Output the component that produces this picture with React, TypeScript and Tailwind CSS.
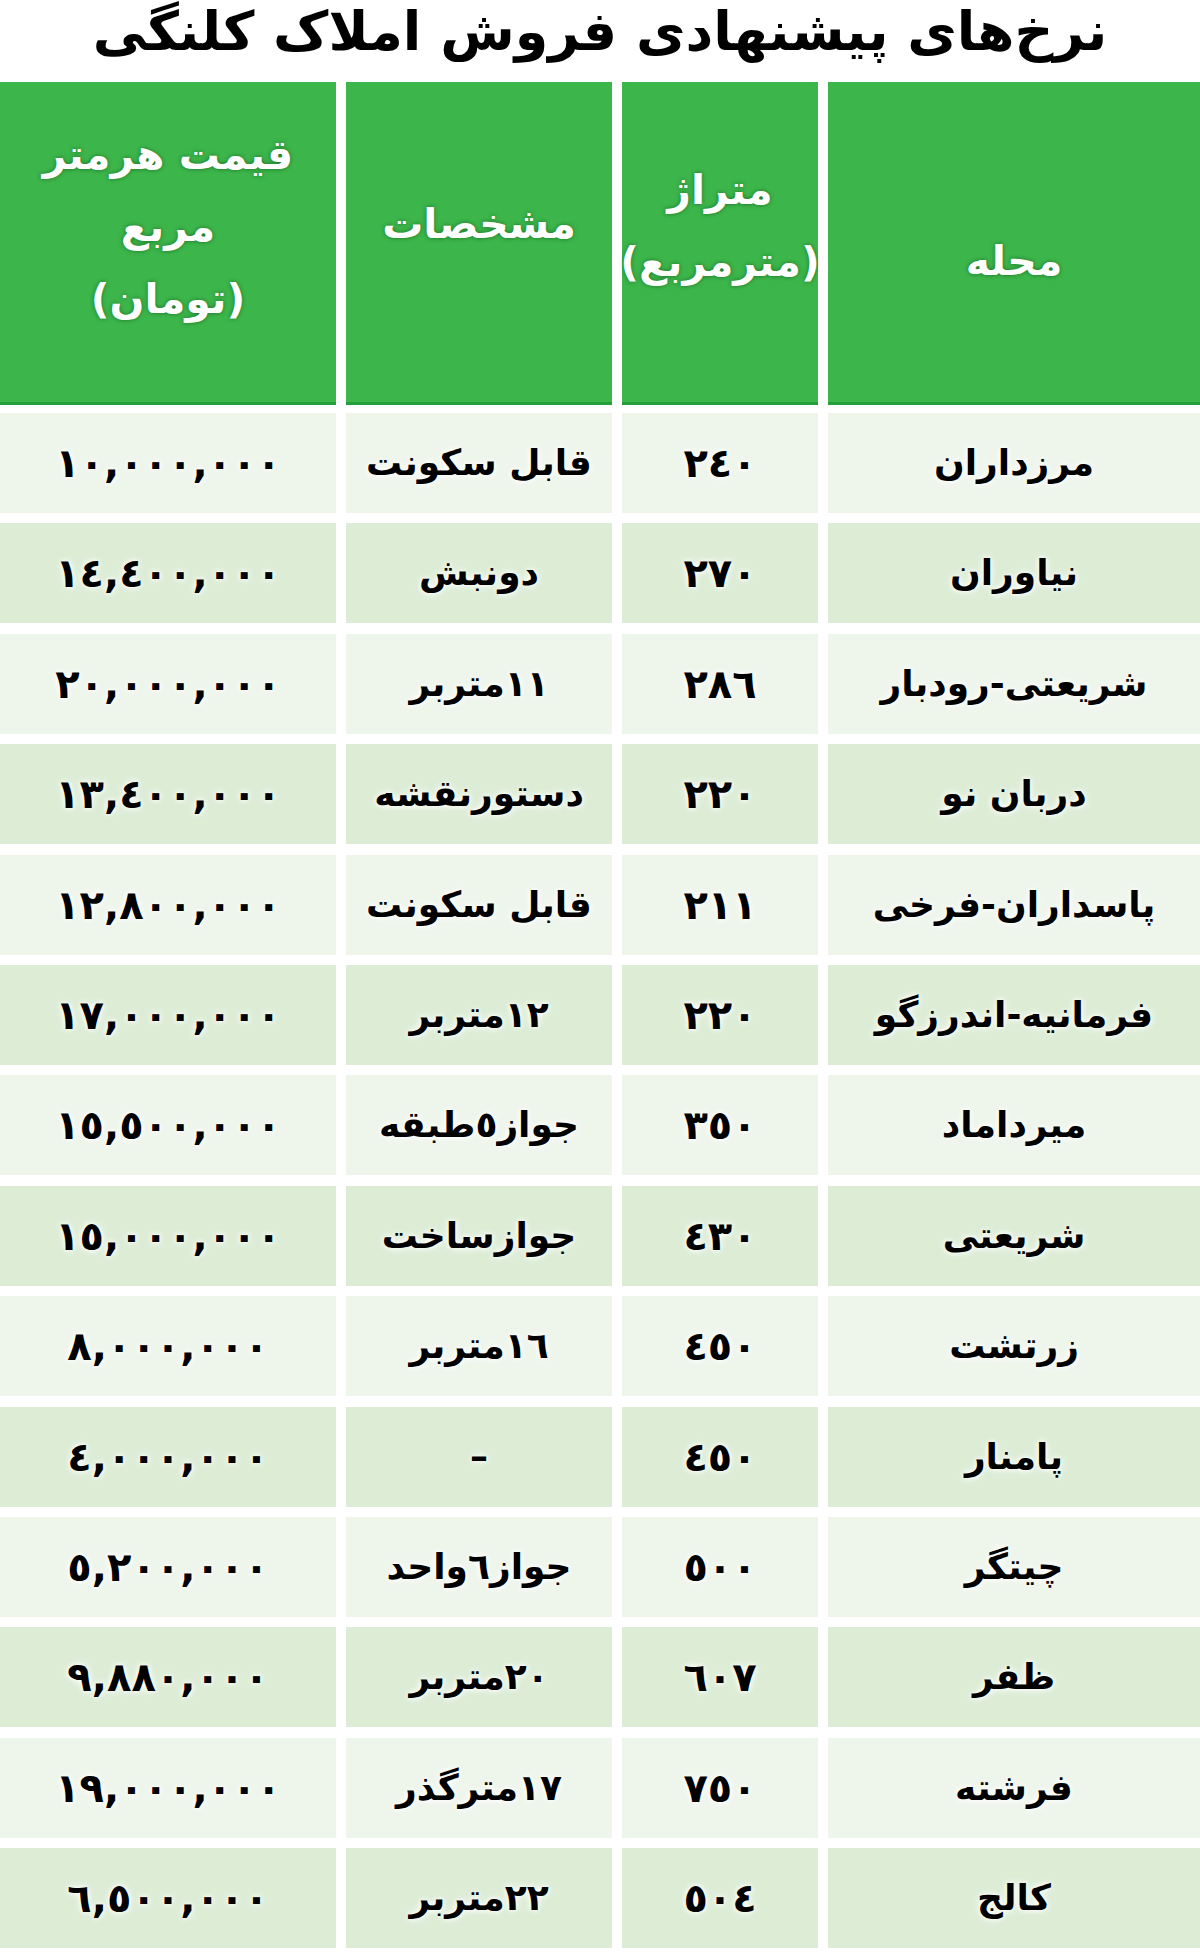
import React from 'react';

interface Listing {
  area: string;
  size: string;
  details: string;
  price: string;
}

// rows from the top of the table, columns read right to left
const listings: Listing[] = [
  { area: 'مرزداران', size: '٢٤٠', details: 'قابل سکونت', price: '١٠,٠٠٠,٠٠٠' },
  { area: 'نیاوران', size: '٢٧٠', details: 'دونبش', price: '١٤,٤٠٠,٠٠٠' },
  { area: 'شریعتی-رودبار', size: '٢٨٦', details: '١١متربر', price: '٢٠,٠٠٠,٠٠٠' },
  { area: 'دربان نو', size: '٢٢٠', details: 'دستورنقشه', price: '١٣,٤٠٠,٠٠٠' },
  { area: 'پاسداران-فرخی', size: '٢١١', details: 'قابل سکونت', price: '١٢,٨٠٠,٠٠٠' },
  { area: 'فرمانیه-اندرزگو', size: '٢٢٠', details: '١٢متربر', price: '١٧,٠٠٠,٠٠٠' },
  { area: 'میرداماد', size: '٣٥٠', details: 'جواز٥طبقه', price: '١٥,٥٠٠,٠٠٠' },
  { area: 'شریعتی', size: '٤٣٠', details: 'جوازساخت', price: '١٥,٠٠٠,٠٠٠' },
  { area: 'زرتشت', size: '٤٥٠', details: '١٦متربر', price: '٨,٠٠٠,٠٠٠' },
  { area: 'پامنار', size: '٤٥٠', details: '–', price: '٤,٠٠٠,٠٠٠' },
  { area: 'چیتگر', size: '٥٠٠', details: 'جواز٦واحد', price: '٥,٢٠٠,٠٠٠' },
  { area: 'ظفر', size: '٦٠٧', details: '٢٠متربر', price: '٩,٨٨٠,٠٠٠' },
  { area: 'فرشته', size: '٧٥٠', details: '١٧مترگذر', price: '١٩,٠٠٠,٠٠٠' },
  { area: 'کالج', size: '٥٠٤', details: '٢٢متربر', price: '٦,٥٠٠,٠٠٠' },
];

const headCell =
  'flex flex-col items-center justify-center h-[323px] bg-[#3cb54b] border-b-[3px] border-[#23a03a] text-white font-bold text-[41px] leading-[72px] [text-shadow:0_0_4px_rgba(0,60,0,0.55)]';

const bodyCell =
  'flex items-center justify-center text-black font-bold [text-shadow:0_0_5px_#fff,0_0_8px_#fff]';

export default function App() {
  return (
    <div
      dir="rtl"
      className="w-[1200px] h-[1952px] overflow-hidden bg-white"
      style={{ fontFamily: '"DejaVu Sans", sans-serif' }}
    >
      <h1 className="h-[82px] flex items-start justify-center text-black font-bold text-[54px] leading-[64px] [text-shadow:0_0_4px_#fff]">
        نرخ‌های پیشنهادی فروش املاک کلنگی
      </h1>

      <div className="grid grid-cols-[372px_196px_266px_336px] gap-x-[10px]">
        <div className={`${headCell} pt-[38px]`}>
          <span>محله</span>
        </div>
        <div className={`${headCell} pb-[32px]`}>
          <span>متراژ</span>
          <span>(مترمربع)</span>
        </div>
        <div className={`${headCell} pb-[36px]`}>
          <span>مشخصات</span>
        </div>
        <div className={`${headCell} pb-[30px]`}>
          <span>قیمت هرمتر</span>
          <span>مربع</span>
          <span>(تومان)</span>
        </div>
      </div>

      <div className="mt-[8px] grid grid-cols-[372px_196px_266px_336px] gap-x-[10px] gap-y-[10.4px] auto-rows-[100px]">
        {listings.map((row, i) => {
          const bg = i % 2 === 0 ? 'bg-[#eef5eb]' : 'bg-[#dcecd5]';
          return (
            <React.Fragment key={i}>
              <div className={`${bodyCell} ${bg} text-[36px]`}>{row.area}</div>
              <div className={`${bodyCell} ${bg} text-[40px]`}>{row.size}</div>
              <div className={`${bodyCell} ${bg} text-[36px]`}>{row.details}</div>
              <div className={`${bodyCell} ${bg} text-[40px]`}>{row.price}</div>
            </React.Fragment>
          );
        })}
      </div>
    </div>
  );
}
